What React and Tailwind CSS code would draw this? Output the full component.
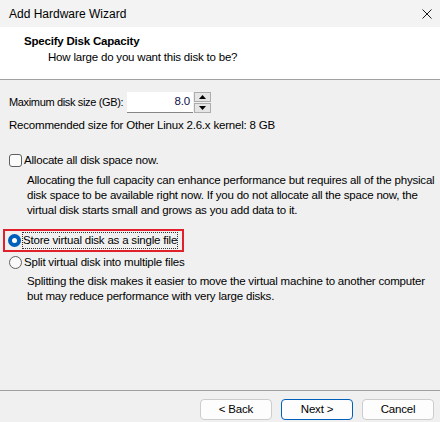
import React from 'react';

const font = { fontFamily: '"Liberation Sans", Arial, sans-serif' };

const Radio = ({ checked }) =>
  checked ? (
    <span className="w-[13px] h-[13px] rounded-full bg-[#005fb8] flex items-center justify-center shrink-0">
      <span className="w-[5px] h-[5px] rounded-full bg-white" />
    </span>
  ) : (
    <span className="w-[13px] h-[13px] rounded-full border border-[#616161] bg-[#f9f9f9] shrink-0" />
  );

const Button = ({ children, primary }) => (
  <button
    type="button"
    className={
      primary
        ? 'w-[72px] h-[21px] rounded-[4px] border border-[#005fb8] bg-[#fdfdfd] text-black leading-none'
        : 'w-[72px] h-[21px] rounded-[4px] border border-[#cccccc] bg-[#fdfdfd] text-black leading-none'
    }
  >
    {children}
  </button>
);

export default function App() {
  return (
    <div
      className="w-[440px] h-[422px] flex flex-col bg-[#f0f0f0] text-[11.5px] tracking-[-0.2px] text-black overflow-hidden whitespace-nowrap"
      style={font}
    >
      {/* title bar */}
      <div className="h-[27px] flex items-center justify-between pl-[9px] pr-[8px] bg-[#f3f3f3]">
        <span className="text-[12px] tracking-normal leading-none">Add Hardware Wizard</span>
        <svg width="10" height="10" viewBox="0 0 10 10" className="text-[#1a1a1a]">
          <path d="M0.5 0.5 L9.5 9.5 M9.5 0.5 L0.5 9.5" stroke="currentColor" strokeWidth="1" />
        </svg>
      </div>

      {/* header */}
      <div className="h-[53px] bg-white border-b border-[#a0a0a0] flex flex-col pl-[24px] pt-[7px]">
        <span className="font-bold leading-[15px] h-[15px]">Specify Disk Capacity</span>
        <span className="pl-[24px] leading-[15px] h-[15px] mt-[1px]">How large do you want this disk to be?</span>
      </div>

      {/* body */}
      <div className="flex-1 flex flex-col px-[9px] pt-[12px]">
        <div className="flex items-center h-[21px]">
          <span className="w-[118px] leading-[15px] text-[11px] tracking-[-0.35px]">Maximum disk size (GB):</span>
          <div className="w-[66px] h-[21px] bg-white border-b border-[#868686] flex items-center justify-end pr-[3px] text-[#10104a]">
            8.0
          </div>
          <div className="flex flex-col ml-[1px] gap-[1px]">
            <span className="w-[17px] h-[10px] border border-[#adadad] bg-[#e5e5e5] flex items-center justify-center">
              <svg width="7" height="4" viewBox="0 0 7 4"><path d="M0 4 L3.5 0 L7 4 Z" fill="#000" /></svg>
            </span>
            <span className="w-[17px] h-[10px] border border-[#adadad] bg-[#e5e5e5] flex items-center justify-center">
              <svg width="7" height="4" viewBox="0 0 7 4"><path d="M0 0 L3.5 4 L7 0 Z" fill="#000" /></svg>
            </span>
          </div>
        </div>
        <p className="mt-[5px] leading-[15px] h-[15px]">Recommended size for Other Linux 2.6.x kernel: 8 GB</p>

        <label className="flex items-center gap-[2px] mt-[20px] h-[15px]">
          <span className="w-[13px] h-[13px] rounded-[3px] border border-[#5f5f5f] bg-[#fbfbfb] shrink-0" />
          <span className="leading-[15px]">Allocate all disk space now.</span>
        </label>
        <p className="mt-[5px] pl-[18px] leading-[15px]">
          Allocating the full capacity can enhance performance but requires all of the physical
          <br />
          disk space to be available right now. If you do not allocate all the space now, the
          <br />
          virtual disk starts small and grows as you add data to it.
        </p>

        <div className="mt-[11px] -ml-[6px] w-[181px] h-[23px] border-2 border-[#e0202a] flex items-center pl-[3px] gap-[2px]">
          <Radio checked />
          <span className="outline outline-1 outline-dotted outline-[#333] outline-offset-0 leading-[15px] h-[15px]">
            Store virtual disk as a single file
          </span>
        </div>
        <label className="flex items-center gap-[2px] mt-[2px] h-[17px]">
          <Radio />
          <span className="leading-[15px]">Split virtual disk into multiple files</span>
        </label>
        <p className="mt-[3px] pl-[18px] leading-[15px]">
          Splitting the disk makes it easier to move the virtual machine to another computer
          <br />
          but may reduce performance with very large disks.
        </p>
      </div>

      {/* footer */}
      <div className="h-[32px] border-t border-[#a0a0a0] flex items-start justify-end gap-[9px] pr-[6px] pt-[8px]">
        <Button>&lt; Back</Button>
        <Button primary>Next &gt;</Button>
        <Button>Cancel</Button>
      </div>
    </div>
  );
}
